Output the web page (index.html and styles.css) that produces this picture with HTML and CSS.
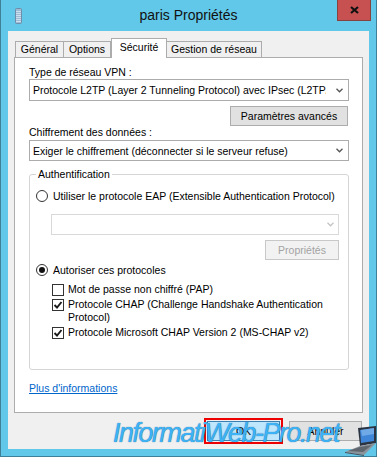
FILE: index.html
```html
<!DOCTYPE html>
<html lang="fr">

<head>
    <meta charset="UTF-8">
    <title>paris Propriétés</title>
    <link rel="stylesheet" href="styles.css">
</head>

<body>
    <div class="window">
        <div class="titlebar">
            <svg class="app-icon" width="7" height="16" viewBox="0 0 7 16">
                <rect x="0.5" y="0.5" width="6" height="15" rx="1" fill="#9dbbd5" stroke="#6d8eab"/>
                <path d="M1 3.5h5M1 5.5h5M1 7.5h5M1 9.5h5M1 11.5h5M1 13.5h5" stroke="#dbe7f1" stroke-width="0.8"/>
            </svg>
            <div class="title">paris Propriétés</div>
            <div class="close">
                <svg width="9" height="8" viewBox="0 0 9 8">
                    <path d="M1 1L8 7M8 1L1 7" stroke="#111" stroke-width="2.2"/>
                </svg>
            </div>
        </div>

        <div class="client">
            <div class="tabs">
                <div class="tab tab-general">Général</div>
                <div class="tab tab-options">Options</div>
                <div class="tab tab-security active">Sécurité</div>
                <div class="tab tab-network">Gestion de réseau</div>
            </div>

            <div class="panel">
                <div class="label">Type de réseau VPN :</div>
                <div class="combo combo-vpn">
                    <span class="combo-text">Protocole L2TP (Layer 2 Tunneling Protocol) avec IPsec (L2TP/IPsec)</span>
                    <svg class="chev" width="7" height="5" viewBox="0 0 7 5">
                        <path d="M0.5 0.8L3.5 3.8L6.5 0.8" fill="none" stroke="#555" stroke-width="1.3"/>
                    </svg>
                </div>
                <div class="btn-row">
                    <button class="btn btn-adv">Paramètres avancés</button>
                </div>

                <div class="label">Chiffrement des données :</div>
                <div class="combo combo-small">
                    <span class="combo-text">Exiger le chiffrement (déconnecter si le serveur refuse)</span>
                    <svg class="chev" width="7" height="5" viewBox="0 0 7 5">
                        <path d="M0.5 0.8L3.5 3.8L6.5 0.8" fill="none" stroke="#555" stroke-width="1.3"/>
                    </svg>
                </div>

                <div class="group">
                    <div class="group-title">Authentification</div>
                    <div class="option option-eap">
                        <span class="radio"></span>
                        <span>Utiliser le protocole EAP (Extensible Authentication Protocol)</span>
                    </div>
                    <div class="combo combo-disabled">
                        <span class="combo-text"></span>
                        <svg class="chev" width="7" height="5" viewBox="0 0 7 5">
                            <path d="M0.5 0.8L3.5 3.8L6.5 0.8" fill="none" stroke="#c4c4c4" stroke-width="1.3"/>
                        </svg>
                    </div>
                    <div class="btn-row">
                        <button class="btn btn-props" disabled>Propriétés</button>
                    </div>
                    <div class="option option-allow">
                        <span class="radio checked"></span>
                        <span>Autoriser ces protocoles</span>
                    </div>
                    <div class="checks">
                        <div class="check-row">
                            <span class="check"></span>
                            <span>Mot de passe non chiffré (PAP)</span>
                        </div>
                        <div class="check-row">
                            <span class="check">
                                <svg width="10" height="10" viewBox="0 0 10 10"><path d="M1.5 5L4 7.5L8.5 2" fill="none" stroke="#1a1a1a" stroke-width="1.9"/></svg>
                            </span>
                            <span>Protocole CHAP (Challenge Handshake Authentication<br>Protocol)</span>
                        </div>
                        <div class="check-row">
                            <span class="check">
                                <svg width="10" height="10" viewBox="0 0 10 10"><path d="M1.5 5L4 7.5L8.5 2" fill="none" stroke="#1a1a1a" stroke-width="1.9"/></svg>
                            </span>
                            <span>Protocole Microsoft CHAP Version 2 (MS-CHAP v2)</span>
                        </div>
                    </div>
                </div>

                <a class="more" href="#">Plus d'informations</a>
            </div>

            <div class="actions">
                <button class="btn btn-default">OK</button>
                <button class="btn">Annuler</button>
            </div>
        </div>

        <div class="watermark">InformatiWeb-Pro.net</div>
        <svg class="laptop" width="31" height="30" viewBox="0 0 31 30">
            <polygon points="13,2 31,0 31,17 15,20" fill="#2b3440"/>
            <polygon points="15,4 29,2 29,15 16,17" fill="#3f86d8"/>
            <polygon points="16,4 29,2 29,8 17,10" fill="#8fc3f2" opacity="0.6"/>
            <polygon points="0,26 15,20 31,17 19,29" fill="#8c939b"/>
            <polygon points="3,25 15,21 27,19 18,26" fill="#5f666e"/>
            <polygon points="0,26 19,29 19,30 0,27" fill="#4a5058"/>
        </svg>
    </div>
</body>

</html>
```

FILE: styles.css
```css
body {
    margin: 0;
    font-family: "Liberation Sans", Arial, sans-serif;
    overflow: hidden;
}

.window {
    position: relative;
    width: 377px;
    height: 457px;
    box-sizing: border-box;
    background-color: #62c8e9;
    border: 1px solid #3f7f98;
    border-top: none;
}

/* title bar */

.titlebar {
    display: grid;
    grid-template-columns: 1fr auto 1fr;
    height: 31px;
}

.app-icon {
    margin: 8px 0 0 14px;
}

.title {
    font-size: 14px;
    line-height: 30px;
    color: #111;
}

.close {
    justify-self: end;
    display: flex;
    align-items: center;
    justify-content: center;
    width: 34px;
    height: 21px;
    margin-right: 5px;
    box-sizing: border-box;
    background-color: #c75050;
    border: 1px solid #86423f;
    border-top: none;
}

/* dialog body */

.client {
    margin: 0 7px 7px;
    height: 418px;
    background-color: #f0f0f0;
    font-size: 10.5px;
    color: #000;
}

.tabs {
    display: flex;
    align-items: flex-end;
    height: 19px;
    padding: 7px 0 0 7px;
}

.tab {
    position: relative;
    height: 16px;
    box-sizing: border-box;
    border: 1px solid #acacac;
    border-bottom: none;
    background-color: #f0f0f0;
    line-height: 15px;
    text-align: center;
}

.tab-general {
    width: 49px;
}

.tab-options {
    width: 48px;
    margin-left: -1px;
}

.tab-security {
    width: 56px;
}

.tab-network {
    width: 96px;
    margin-left: -1px;
}

.tab.active {
    z-index: 1;
    height: 20px;
    margin-bottom: -1px;
    background-color: #fff;
    line-height: 17px;
}

.panel {
    width: 349px;
    height: 356px;
    margin-left: 6px;
    box-sizing: border-box;
    padding: 8px 13px 0 14px;
    background-color: #fff;
    border: 1px solid #acacac;
}

.label {
    line-height: 13px;
}

.combo {
    display: flex;
    align-items: center;
    height: 22px;
    box-sizing: border-box;
    padding-left: 3px;
    background-color: #fff;
    border: 1px solid #acacac;
}

.combo-small {
    height: 21px;
    margin-top: 1px;
}

.combo-text {
    flex: 1;
    min-width: 0;
    overflow: hidden;
    white-space: nowrap;
}

.chev {
    margin: 0 5px 0 6px;
}

.combo-vpn .chev {
    margin-left: 10px;
}

.combo-disabled {
    height: 21px;
    margin: 11px 0 0 15px;
    border-color: #d9d9d9;
}

.combo-disabled .chev {
    margin-right: 4px;
}

.btn-row {
    display: flex;
    justify-content: flex-end;
}

.btn {
    width: 73px;
    height: 20px;
    padding: 0;
    font: inherit;
    color: #000;
    background-color: #e1e1e1;
    border: 1px solid #adadad;
}

.btn-adv {
    width: 118px;
    margin: 5px 1px 0 0;
}

.btn-props {
    width: 74px;
    margin-top: 5px;
    color: #a3a3a3;
    background-color: #f2f2f2;
    border-color: #c8c8c8;
}

.btn-default {
    background-color: #bee6fd;
    border-color: #3c7fb1;
    outline: 2px solid #ee0000;
    outline-offset: 1px;
}

/* authentication group */

.group {
    margin-top: 13px;
    padding: 0 9px 28px 6px;
    border: 1px solid #d5d5d5;
    border-radius: 3px;
}

.group-title {
    width: max-content;
    margin-top: -8px;
    padding: 0 2px;
    background-color: #fff;
    line-height: 14px;
}

.option {
    display: flex;
    align-items: center;
    gap: 5px;
    line-height: 14px;
}

.option-eap {
    margin-top: 8px;
}

.option-allow {
    margin-top: 3px;
}

.radio {
    display: flex;
    align-items: center;
    justify-content: center;
    width: 12px;
    height: 12px;
    box-sizing: border-box;
    border: 1px solid #333;
    border-radius: 50%;
    background-color: #fff;
}

.radio.checked::after {
    content: "";
    width: 6px;
    height: 6px;
    border-radius: 50%;
    background-color: #111;
}

.checks {
    margin: 6px 0 0 16px;
}

.check-row {
    display: flex;
    align-items: flex-start;
    gap: 4px;
    line-height: 13px;
    margin-bottom: 2px;
}

.check {
    display: flex;
    align-items: center;
    justify-content: center;
    flex: none;
    width: 12px;
    height: 12px;
    margin-top: 1px;
    box-sizing: border-box;
    border: 1px solid #333;
    background-color: #fff;
}

.more {
    display: block;
    width: max-content;
    margin-top: 12px;
    line-height: 13px;
    color: #0066cc;
}

.actions {
    display: flex;
    justify-content: flex-end;
    gap: 9px;
    padding: 8px 7px 0 0;
}

/* screenshot overlays */

.watermark {
    position: absolute;
    left: 112px;
    top: 420px;
    font: italic 27px/27px "Liberation Sans", Arial, sans-serif;
    letter-spacing: -1.5px;
    color: #3db2f4;
    text-shadow: 0 0 1px #1b5f94;
    white-space: nowrap;
}

.laptop {
    position: absolute;
    right: 0;
    bottom: 0;
}
```
